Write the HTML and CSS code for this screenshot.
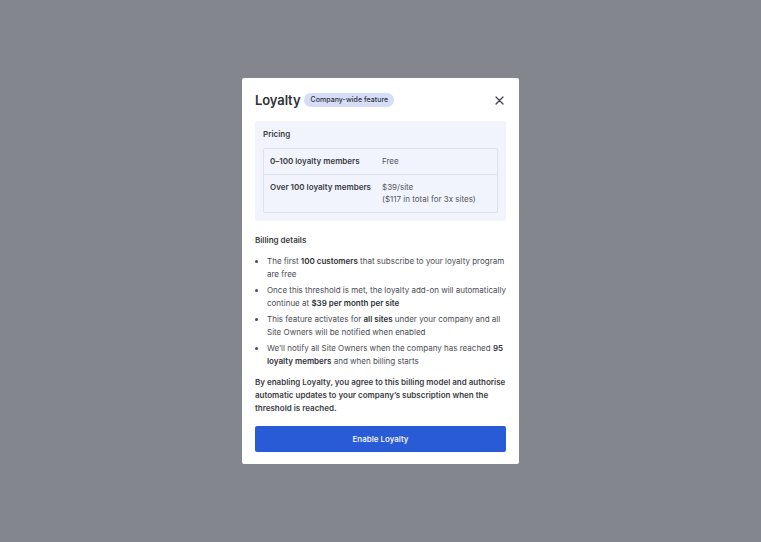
FILE: index.html
```html
<!DOCTYPE html>
<html>
<head>
<meta charset="utf-8">
<link rel="stylesheet" href="styles.css">
</head>
<body>
<div class="overlay">
  <div class="modal">
    <div class="header">
      <h1 class="title">Loyalty</h1>
      <span class="badge">Company-wide feature</span>
      <button class="close" aria-label="Close">
        <svg width="9" height="9" viewBox="0 0 9 9"><path d="M1 1L8 8M8 1L1 8" stroke="#3a3c44" stroke-width="1.2" stroke-linecap="round"/></svg>
      </button>
    </div>
    <div class="pricing">
      <div class="pricing-title">Pricing</div>
      <div class="table">
        <div class="row">
          <div class="cell-label">0–100 loyalty members</div>
          <div class="cell-value">Free</div>
        </div>
        <div class="row">
          <div class="cell-label">Over 100 loyalty members</div>
          <div class="cell-value">$39/site<br>($117 in total for 3x sites)</div>
        </div>
      </div>
    </div>
    <div class="section-title">Billing details</div>
    <ul class="list">
      <li>The first <b>100 customers</b> that subscribe to your loyalty program are free</li>
      <li>Once this threshold is met, the loyalty add-on will automatically continue at <b>$39 per month per site</b></li>
      <li>This feature activates for <b>all sites</b> under your company and all Site Owners will be notified when enabled</li>
      <li>We’ll notify all Site Owners when the company has reached <b>95 loyalty members</b> and when billing starts</li>
    </ul>
    <p class="agree">By enabling Loyalty, you agree to this billing model and authorise automatic updates to your company’s subscription when the threshold is reached.</p>
    <button class="primary">Enable Loyalty</button>
  </div>
</div>
</body>
</html>
```
FILE: styles.css
```css
* { box-sizing: border-box; }
html, body { margin: 0; padding: 0; }
body {
  width: 761px; height: 542px;
  background: #84868d;
  font-family: Inter, "Noto Sans", sans-serif;
  color: #3a3c44;
}
.overlay {
  width: 761px; height: 542px;
  display: flex; align-items: flex-start; justify-content: center;
  padding-top: 78px;
}
.modal {
  width: 277px;
  background: #fff;
  border-radius: 2px;
  padding: 13px 13px 12px;
  display: flex; flex-direction: column;
}
.header {
  display: flex; align-items: center;
  height: 18px;
  margin-bottom: 12px;
}
.title {
  margin: 0;
  font-size: 13px; font-weight: 600;
  color: #2f3138;
  letter-spacing: -0.1px;
}
.badge {
  margin-left: 4px;
  background: #d5ddf8;
  color: #2f3138;
  font-size: 7px; font-weight: 500;
  padding: 2px 6px;
  border-radius: 8px;
  line-height: 10px;
  letter-spacing: 0.05px;
}
.close {
  margin-left: auto;
  background: none; border: 0; padding: 0;
  width: 12px; height: 12px;
  display: flex; align-items: center; justify-content: center;
  margin-right: 1px;
}
.pricing {
  background: #f1f4fd;
  border-radius: 2px;
  padding: 8px 8px 8px;
}
.pricing-title {
  font-size: 8px; font-weight: 600;
  color: #3a3c44;
  line-height: 11px;
  margin-bottom: 8px;
}
.table {
  border: 1px solid #dde1ea;
  border-radius: 2px;
}
.row {
  display: flex;
  padding: 6px 6px;
  font-size: 8px; line-height: 12.5px;
}
.row + .row { border-top: 1px solid #dde1ea; }
.cell-label { width: 112px; font-weight: 600; color: #3a3c44; }
.cell-value { color: #55575f; }
.section-title {
  font-size: 8px; font-weight: 600;
  line-height: 11px;
  margin-top: 14px;
  margin-bottom: 9px;
}
.list {
  margin: 0; padding: 0 0 0 12px;
  font-size: 8px; line-height: 13px;
  color: #4a4c54;
}
.list li { margin-bottom: 3px; padding-left: 0; }
.list b { font-weight: 600; color: #2f3138; }
.agree {
  margin: 5px 0 0;
  font-size: 8px; font-weight: 600;
  line-height: 13px;
  color: #3a3c44;
}
.primary {
  margin-top: 11px;
  height: 26px;
  background: #2a5bd7;
  border: 0; border-radius: 2px;
  color: #fff;
  font-family: inherit;
  font-size: 8px; font-weight: 500;
}
```
